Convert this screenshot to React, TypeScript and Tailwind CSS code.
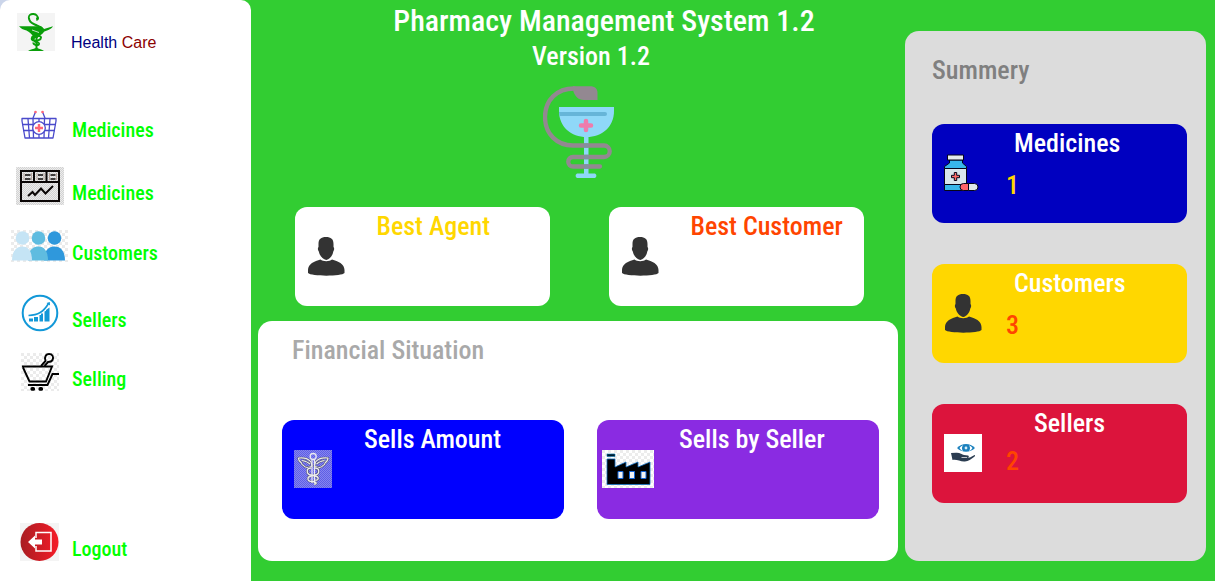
import type { ReactNode } from "react";

function Checker({ id, size, a, b }: { id: string; size: number; a: string; b: string }) {
  return (
    <defs>
      <pattern id={id} width={size * 2} height={size * 2} patternUnits="userSpaceOnUse">
        <rect width={size * 2} height={size * 2} fill={a} />
        <rect width={size} height={size} fill={b} />
        <rect x={size} y={size} width={size} height={size} fill={b} />
      </pattern>
    </defs>
  );
}

function BrandLogo() {
  return (
    <svg width="38" height="38" viewBox="0 0 38 38" aria-hidden="true">
      <rect width="38" height="38" fill="#f4f4f4" />
      <path d="M2 13.3 H24 L27 16 L36 13.3 C34 17 29 17.500 26.500 19 C24 21 22 23 20.500 25 H17 C15.500 21.500 13 19.500 9.500 17.500 C6 16.200 4 16 2 13.300Z" fill="#0a9e0a" />
      <path d="M12 6 C11 2 14 .8 16.500 1 C19.500 1.300 21 3 20.600 6" fill="none" stroke="#0a9e0a" strokeWidth="1.800" />
      <path d="M21.500 3.500 C22.500 5.500 22 7.500 19.500 8 L19 5Z" fill="#0a9e0a" />
      <path d="M12 5 C12 10 16 10.500 19 12 C23 14 26.500 15 26 18 C25.500 21.500 20 22 17 23 C14 24 14 27 17 27.500 C20 28 24 27 24 24.500 C24 22 17 22.500 16.500 26 C16.500 30 22.500 28.500 22 31 C21.500 33 16 32 16.500 29.500" fill="none" stroke="#0a9e0a" strokeWidth="2" />
      <path d="M18.500 22 H20.500 V35 C22 36 25 36.500 27 38 H11 C13 36.500 17 36 18.500 35Z" fill="#0a9e0a" />
      <path d="M15 17 L22 19.500" stroke="#f4f4f4" strokeWidth="0.800" />
    </svg>
  );
}

function BasketIcon() {
  return (
    <svg width="38" height="32" viewBox="0 0 38 32" aria-hidden="true">
      <g transform="translate(-2 0)">
        <g fill="none" stroke="#4a4acb" strokeWidth="1.300" strokeLinejoin="round">
          <path d="M3 8.500 H37 V11 L34 28 H6 L3 11Z" />
          <path d="M3 14.500 H37 M4 20.500 H36 M9 9 L10.500 28 M14 9 L14.500 28 M20 9 V28 M25.500 9 L25 28 M31 9 L29.500 28" />
          <path d="M14 8 L16.500 2 M26 8 L23.500 2" />
        </g>
        <circle cx="16.500" cy="2" r="1.300" fill="#ff6577" />
        <circle cx="23.500" cy="2" r="1.300" fill="#ff6577" />
        <circle cx="20" cy="18" r="6.300" fill="#fff" stroke="#4a4acb" strokeWidth="1.300" />
        <path d="M20 14 V22 M16 18 H24" stroke="#ff6577" strokeWidth="2.400" />
      </g>
    </svg>
  );
}

function StockIcon() {
  return (
    <svg width="48" height="38" viewBox="0 0 48 38" aria-hidden="true">
      <Checker id="stock-grid" size={1} a="#ececec" b="#d2d2d2" />
      <rect width="48" height="38" rx="1" fill="url(#stock-grid)" />
      <g fill="none" stroke="#0b0706" strokeWidth="2">
        <path d="M5 4 H43 V34 H5Z M5 15 H43 M18 4 V15 M30.500 4 V15" />
        <path d="M9 8 H14.500 M9 12 H14.500 M22 8 H27 M22 12 H27 M34.500 8 H39.500 M34.500 12 H39.500" strokeWidth="1.700" />
        <path d="M12 29 L16.500 25 L19 28 L25 21.500 L29.500 26.500 L37 19" />
      </g>
      <path d="M8 6 V13 M15.500 6 V13 M21 6 V13 M28 6 V13 M33.500 6 V13 M40.500 6 V13" stroke="#a58b80" strokeWidth="0.700" />
    </svg>
  );
}

function PeopleIcon() {
  return (
    <svg width="57" height="35" viewBox="0 0 57 35" aria-hidden="true">
      <Checker id="people-grid" size={3} a="#ffffff" b="#ebebeb" />
      <rect width="57" height="32" fill="url(#people-grid)" />
      <g fill="#2f98dc">
        <circle cx="43.500" cy="8" r="6.800" />
        <path d="M33 30.500 V25 C35 19 39 16.500 43.500 16.500 C49.500 16.500 54 21 54 30.500Z" />
      </g>
      <g fill="#5fbce0">
        <circle cx="27.500" cy="8" r="6.800" />
        <path d="M17 30.500 V25 C19 19 23 16.500 27.500 16.500 C33 16.500 37 21 37 30.500Z" />
      </g>
      <g fill="#c5e4f5">
        <circle cx="11.500" cy="8" r="6.800" />
        <path d="M1 30.500 C1 21 5.500 16.500 11.500 16.500 C17 16.500 21 21 21 30.500Z" />
      </g>
    </svg>
  );
}

function GrowthIcon() {
  return (
    <svg width="38" height="38" viewBox="0 0 38 38" aria-hidden="true">
      <circle cx="19" cy="19" r="17.300" fill="#fff" stroke="#1298d8" strokeWidth="2" />
      <path d="M8 24.500 H12 V27.500 H8Z M13 23 H17 V27.500 H13Z M18.500 21 H22 V27.500 H18.500Z M20 19.500 H22 V22 H20Z M23.500 17.500 L25.500 16.500 V27.500 H23.500Z M25 16 L28.500 13.500 V27.500 H24.500Z" fill="#1298d8" />
      <path d="M7.500 21.500 C17 21 22.500 18 27.500 9.500" fill="none" stroke="#1298d8" strokeWidth="1.600" />
      <path d="M25.500 9 L28.800 8 L29 11.500Z" fill="#1298d8" />
    </svg>
  );
}

function CartIcon() {
  return (
    <svg width="38" height="38" viewBox="0 0 38 38" aria-hidden="true">
      <Checker id="cart-grid" size={3} a="#ffffff" b="#ebebeb" />
      <rect width="38" height="38" fill="url(#cart-grid)" />
      <g fill="none" stroke="#000" strokeWidth="1.900">
        <path d="M1 13.500 H31 L25 28.500 H8.500 L2 14.500" />
        <path d="M7 32 H26.500 L31.500 21 H38" />
        <path d="M20 13 L24.500 8 C23 3 25.500 1 28 1 C31.500 1 33 4 31.500 7 C30.500 9 28 9 27 9 L23.500 13" />
      </g>
      <rect x="9.500" y="34" width="4.500" height="3.800" rx="1.500" />
      <rect x="17.500" y="34" width="4.500" height="3.800" rx="1.500" />
    </svg>
  );
}

function LogoutIcon() {
  return (
    <svg width="39" height="38" viewBox="0 0 39 38" aria-hidden="true">
      <defs>
        <linearGradient id="exit-fill" x1="0" y1="0" x2="1" y2="0">
          <stop offset="0" stopColor="#a81d22" />
          <stop offset="1" stopColor="#f51c28" />
        </linearGradient>
      </defs>
      <rect width="39" height="38" fill="#f4f4f4" />
      <circle cx="19.500" cy="19" r="19" fill="url(#exit-fill)" />
      <path d="M16 15 V9.500 H31 V28 H16 V23" fill="none" stroke="#fff" strokeWidth="1.500" />
      <path d="M8 19 L15 12.500 V16.500 H22 V21.500 H15 V25.500Z" fill="#fff" />
    </svg>
  );
}

function ChaliceLogo() {
  return (
    <svg width="71" height="94" viewBox="0 0 71 94" aria-hidden="true">
      <path d="M41 50 H45.500 V88.500 H52 A2.500 2.500 0 0 1 52 93 H34 A2.500 2.500 0 0 1 34 88.500 H41Z" fill="#8fd8f8" />
      <path d="M16 22 H71 V26 C71 42 59 52 43.500 52 C28 52 16 42 16 26Z" fill="#8fd8f8" />
      <path d="M16 27 H62 A2 2 0 0 1 62 31 H16.500Z" fill="#66b5d8" />
      <path d="M43 36 V45 M38 40.500 H48" stroke="#ef7cac" strokeWidth="4.500" strokeLinecap="round" />
      <path d="M31 3.500 C14 3.500 2 15 2 32 C2 49 14 60.500 30 60.500 H61 A5.750 5.750 0 0 1 61 72 H30 A4.750 4.750 0 0 0 30 81.500 H57" fill="none" stroke="#938891" strokeWidth="4.300" strokeLinecap="round" />
      <path d="M30 1.300 H47 C52 1.300 54.500 4 54.500 8 V15 H41 C35 15 31.500 11 30 5Z" fill="#938891" />
      <path d="M43.300 58.300 V62.700 M43.300 69.800 V74.200 M43.300 79.300 V83.700" stroke="#8390a0" strokeWidth="4.500" />
    </svg>
  );
}

function PersonIcon() {
  return (
    <svg width="38" height="39" viewBox="0 0 38 39" aria-hidden="true">
      <path d="M19 0 C24 0 26.500 2 26.500 7 V10 C27.600 11 27.200 13.500 26.300 14.500 C25.500 19 22.500 22.500 19.300 23 C16 22.500 12.700 19 11.800 14.500 C10.800 13.500 10.500 11 11.500 10 V7 C11.500 2 14 0 19 0Z" fill="#333" />
      <path d="M13.500 22.500 C16 24.800 22.500 24.800 25 22.500 C31 24 37.500 27 37.500 33 V36 C35 39.500 4 39.500 1 36 V33 C1 27 7.500 24 13.500 22.500Z" fill="#333" />
    </svg>
  );
}

function CaduceusIcon() {
  return (
    <svg width="38" height="38" viewBox="0 0 38 38" aria-hidden="true">
      <Checker id="caduceus-grid" size={1} a="#8585ee" b="#5e5ee6" />
      <rect width="38" height="38" fill="url(#caduceus-grid)" />
      <g fill="none" strokeLinejoin="round">
        <path d="M4.500 8 C9 7.500 14 8 17 12 L18 16 C15 18 11 18 9.500 15.500 C8 15 7.500 14 7.500 13 C6 12 4.500 10 4.500 8Z M34 8 C29.500 7.500 24.500 8 21.500 12 L20.500 16 C23.500 18 27.500 18 29 15.500 C30.500 15 31 14 31 13 C32.500 12 34 10 34 8Z M8 10.500 C11 11 14 12 16 14 M30.500 10.500 C27.500 11 24.500 12 22.500 14" stroke="#55556d" strokeWidth="2.200" />
        <path d="M4.500 8 C9 7.500 14 8 17 12 L18 16 C15 18 11 18 9.500 15.500 C8 15 7.500 14 7.500 13 C6 12 4.500 10 4.500 8Z M34 8 C29.500 7.500 24.500 8 21.500 12 L20.500 16 C23.500 18 27.500 18 29 15.500 C30.500 15 31 14 31 13 C32.500 12 34 10 34 8Z M8 10.500 C11 11 14 12 16 14 M30.500 10.500 C27.500 11 24.500 12 22.500 14" stroke="#ececf0" strokeWidth="1.100" />
        <path d="M17 18 C12 18 12 24 17 25 L21 26 C26 27 24.500 31 21 30 M21 18 C26 18 26 24 21 25 L17 26 C12.500 27 13 31.500 18 31.500 C22 31.500 24 34 20 34" stroke="#55556d" strokeWidth="2.400" />
        <path d="M17 18 C12 18 12 24 17 25 L21 26 C26 27 24.500 31 21 30 M21 18 C26 18 26 24 21 25 L17 26 C12.500 27 13 31.500 18 31.500 C22 31.500 24 34 20 34" stroke="#ececf0" strokeWidth="1.300" />
        <circle cx="19.200" cy="6.500" r="3" stroke="#ececf0" strokeWidth="1.300" />
        <path d="M18 10 V33 M20.500 10 V33" stroke="#ececf0" strokeWidth="1.200" />
      </g>
    </svg>
  );
}

function FactoryIcon() {
  return (
    <svg width="52" height="38" viewBox="0 0 52 38" aria-hidden="true">
      <Checker id="factory-grid" size={3} a="#ffffff" b="#ececec" />
      <rect width="52" height="38" fill="url(#factory-grid)" />
      <path d="M5 4 H13 V6.500 H5Z" fill="#001a2c" stroke="#0a7ab8" strokeWidth="0.600" />
      <path d="M5 9 H13 V17 L24 12 V17 L36 12 V17 L48 12 V34.500 H5Z" fill="#000" stroke="#0f6fc4" strokeWidth="0.800" />
      <path d="M16 21.500 H21 V28.500 H16Z M27.500 21.500 H32.500 V28.500 H27.500Z M39 21.500 H44 V28.500 H39Z" fill="#f4f4f4" stroke="#1466d8" strokeWidth="1" />
    </svg>
  );
}

function BottleIcon() {
  return (
    <svg width="38" height="38" viewBox="0 0 38 38" aria-hidden="true">
      <g stroke="#05051a" strokeWidth="1">
        <path d="M5.500 6 H18.500 V9 L22.500 12.500 V36.500 H.5 V12.500 L5.500 9Z" fill="#38b6ea" />
        <path d="M3.500 1 H19.500 V6 H3.500Z" fill="#e4eaee" />
        <path d="M.5 14.500 H22.500 V30.500 H.5Z" fill="#d9e6ec" />
        <path d="M10.300 18.500 H12.700 V21.300 H15.500 V23.700 H12.700 V26.500 H10.300 V23.700 H7.500 V21.300 H10.300Z" fill="#ff6a68" />
        <path d="M24.500 29.500 H19.500 A3.500 3.500 0 0 0 19.500 36.500 H24.500Z" fill="#ff6468" />
        <path d="M24.500 29.500 H30.500 A3.500 3.500 0 0 1 30.500 36.500 H24.500Z" fill="#dfe6ea" />
      </g>
    </svg>
  );
}

function CareIcon() {
  return (
    <svg width="38" height="38" viewBox="0 0 38 38" aria-hidden="true">
      <rect width="38" height="38" fill="#fff" />
      <path d="M13 14 C18 8.500 26 8.500 31 14 C26 19 18 19 13 14Z" fill="#1b80bd" />
      <path d="M15.500 14 C17 12 18.500 11.500 19 11.500 C17.500 13 17.800 15.500 19 17 C17.500 16.500 16.500 15.500 15.500 14Z M28.500 14 C27 12 25.500 11.500 25 11.500 C26.500 13 26.200 15.500 25 17 C26.500 16.500 27.500 15.500 28.500 14Z" fill="#fff" />
      <circle cx="22" cy="14" r="1.400" fill="#d9eef8" />
      <path d="M7 19 L12 18.800 C16 18.500 18 20.500 20 21 L24 21.500 C25.500 22 25 23.500 23 23.500 L26 23.500 L30.500 21 C31.500 21 31 22.500 30 23 C27 25 24 28 20 27.500 C16 27.500 12 25 8.500 26Z" fill="#2b3c50" />
      <path d="M17.500 23.500 H23" stroke="#fff" strokeWidth="0.700" />
    </svg>
  );
}

interface NavItem {
  label: string;
  icon: ReactNode;
  gap: string;
}

const navItems: NavItem[] = [
  { label: "Medicines", icon: <BasketIcon />, gap: "mt-[59px]" },
  { label: "Medicines", icon: <StockIcon />, gap: "mt-[25px]" },
  { label: "Customers", icon: <PeopleIcon />, gap: "mt-[25px]" },
  { label: "Sellers", icon: <GrowthIcon />, gap: "mt-[29px]" },
  { label: "Selling", icon: <CartIcon />, gap: "mt-[21px]" },
];

function NavLink({ label, icon, gap }: NavItem) {
  return (
    <a href="#" className={`flex items-end gap-1 text-[20px] leading-6 font-medium text-[#00ff00] ${gap}`}>
      <span className="flex w-[57px] justify-center">{icon}</span>
      <span>{label}</span>
    </a>
  );
}

interface StatCardProps {
  title: string;
  value?: string;
  icon: ReactNode;
  className: string;
  iconClass?: string;
  titleClass?: string;
  valueClass?: string;
}

function StatCard({ title, value, icon, className, iconClass = "pl-3", titleClass = "pl-2", valueClass = "" }: StatCardProps) {
  return (
    <section className={`flex h-[99px] rounded-xl text-[26px] font-medium ${className}`}>
      <div className={`w-[74px] shrink-0 pt-[30px] ${iconClass}`}>{icon}</div>
      <div className="whitespace-nowrap">
        <h3 className={`leading-[38px] ${titleClass}`}>{title}</h3>
        {value && <p className={`leading-[38px] ${valueClass}`}>{value}</p>}
      </div>
    </section>
  );
}

export default function App() {
  return (
    <div className="flex min-h-screen bg-[#32cd32] font-['Roboto_Condensed','Liberation_Sans',sans-serif]">
      <div className="flex w-[251px] shrink-0 bg-linear-to-r from-[#cbd5ea] from-50% to-[#32cd32] to-50%">
        <nav className="flex w-full flex-col rounded-t-[10px] bg-white px-[11px] pt-[13px] pb-5">
          <div className="flex items-end gap-4 pl-[6px]">
            <BrandLogo />
            <p className="font-['Liberation_Sans',Arial,sans-serif] text-[16px] leading-4 text-[#8b0000]">
              <span className="text-[#000080]">Health</span> Care
            </p>
          </div>
          {navItems.map((item, i) => (
            <NavLink key={i} {...item} />
          ))}
          <NavLink label="Logout" icon={<LogoutIcon />} gap="mt-auto" />
        </nav>
      </div>

      <main className="flex min-w-0 flex-1 flex-col px-[7px] pt-[3px] pb-5">
        <header className="flex flex-col items-center font-medium text-white">
          <h1 className="pl-[52px] text-[30px] leading-9">Pharmacy Management System 1.2</h1>
          <p className="pl-[26px] text-[26px] leading-[34px]">Version 1.2</p>
          <div className="mt-3">
            <ChaliceLogo />
          </div>
        </header>

        <div className="mt-7 flex justify-center gap-[59px] pl-0.5">
          <StatCard title="Best Agent" icon={<PersonIcon />} className="w-[255px] bg-white text-[#ffd700]" />
          <StatCard title="Best Customer" icon={<PersonIcon />} className="w-[255px] bg-white text-[#ff4500]" />
        </div>

        <section className="mt-[15px] flex-1 rounded-[14px] bg-white pt-[11px] pr-[19px] pl-6">
          <h2 className="pl-[10px] text-[26px] leading-9 font-medium text-[#a9a9a9]">Financial Situation</h2>
          <div className="mt-[52px] grid grid-cols-2 gap-[33px]">
            <StatCard title="Sells Amount" icon={<CaduceusIcon />} className="bg-[#0000ff] text-white" />
            <StatCard title="Sells by Seller" icon={<FactoryIcon />} className="bg-[#8a2be2] text-white" iconClass="pl-[5px]" />
          </div>
        </section>
      </main>

      <aside className="mt-[31px] mr-[9px] mb-5 w-[301px] shrink-0 rounded-[14px] bg-[#dcdcdc] pr-[19px] pl-[27px]">
        <h2 className="pt-[21px] text-[26px] leading-9 font-medium text-[#808080]">Summery</h2>
        <div className="mt-9 flex flex-col gap-[41px]">
          <StatCard title="Medicines" value="1" icon={<BottleIcon />} className="bg-[#0000c0] text-white" valueClass="pt-1 text-[#ffd700]" />
          <StatCard title="Customers" value="3" icon={<PersonIcon />} className="bg-[#ffd700] text-white" valueClass="pt-1 text-[#ff4500]" />
          <StatCard title="Sellers" value="2" icon={<CareIcon />} className="bg-[#dc143c] text-white" titleClass="pl-7" valueClass="text-[#ff4500]" />
        </div>
      </aside>
    </div>
  );
}
